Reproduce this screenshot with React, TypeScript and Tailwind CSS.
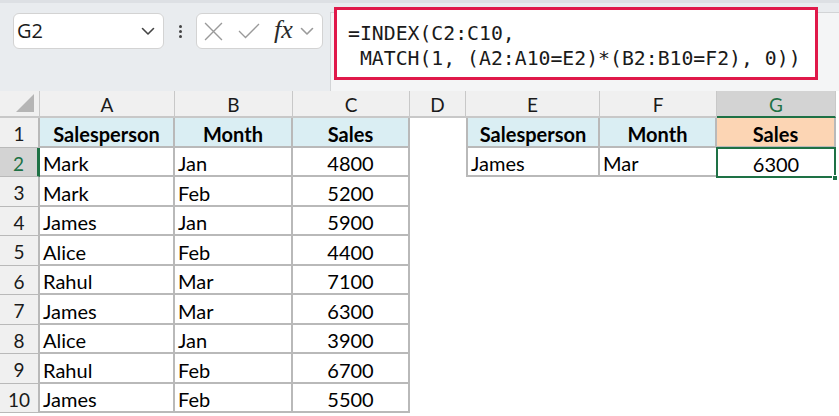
import React from "react";

const cols = [
  { key: "A", w: 135 },
  { key: "B", w: 118 },
  { key: "C", w: 117 },
  { key: "D", w: 56 },
  { key: "E", w: 134 },
  { key: "F", w: 117 },
  { key: "G", w: 119 },
];

const data = [
  ["Mark", "Jan", "4800"],
  ["Mark", "Feb", "5200"],
  ["James", "Jan", "5900"],
  ["Alice", "Feb", "4400"],
  ["Rahul", "Mar", "7100"],
  ["James", "Mar", "6300"],
  ["Alice", "Jan", "3900"],
  ["Rahul", "Feb", "6700"],
  ["James", "Feb", "5500"],
];

function Chevron({ className }: { className?: string }) {
  return (
    <svg className={className} width="14" height="9" viewBox="0 0 14 9" fill="none">
      <path d="M1.5 1.5 L7 7 L12.5 1.5" stroke="currentColor" strokeWidth="1.6" strokeLinecap="round" strokeLinejoin="round" />
    </svg>
  );
}

function Cell({
  text = "",
  w,
  align = "left",
  bold = false,
  bg = "bg-white",
  border = "",
}: {
  text?: string;
  w: number;
  align?: "left" | "center";
  bold?: boolean;
  bg?: string;
  border?: string;
}) {
  return (
    <div
      className={`h-full flex items-center pt-[4px] text-[20px] text-black ${bg} ${border} ${
        align === "center" ? "justify-center" : "justify-start pl-[3px]"
      } ${bold ? "font-bold" : ""}`}
      style={{ width: w }}
    >
      {text}
    </div>
  );
}

export default function App() {
  return (
    <div className="w-[839px] h-[416px] overflow-hidden bg-white font-['Lato',sans-serif]">
      {/* Toolbar / formula bar */}
      <div className="h-[91px] bg-[#e9ecef] flex flex-col">
        <div className="h-[3px] bg-[#dde0e4]" />
        <div className="flex items-start flex-1">
          {/* Name box */}
          <div className="ml-[13px] mt-[10px] w-[151px] h-[36px] rounded-[6px] border border-[#d3d3d3] bg-white flex items-center justify-between pl-[3px] pr-[8px]">
            <span className="text-[20px] text-[#1a1a1a] font-['Open_Sans',sans-serif]">G2</span>
            <Chevron className="text-[#444]" />
          </div>
          {/* Vertical dots */}
          <div className="w-[32px] h-[36px] mt-[10px] flex flex-col items-center justify-center gap-[2px]">
            <div className="w-[3px] h-[3px] rounded-full bg-[#444]" />
            <div className="w-[3px] h-[3px] rounded-full bg-[#444]" />
            <div className="w-[3px] h-[3px] rounded-full bg-[#444]" />
          </div>
          {/* Formula buttons */}
          <div className="mt-[10px] w-[127px] h-[36px] rounded-[6px] border border-[#d3d3d3] bg-white flex items-center pl-[7px]">
            <svg width="19" height="19" viewBox="0 0 18 18" className="text-[#9a9a9a]">
              <path d="M1 1 L17 17 M17 1 L1 17" stroke="currentColor" strokeWidth="1.3" />
            </svg>
            <svg width="22" height="16" viewBox="0 0 22 16" className="ml-[15px] text-[#9a9a9a]">
              <path d="M1 8 L7.5 14.5 L21 1" stroke="currentColor" strokeWidth="1.3" fill="none" />
            </svg>
            <span className="ml-[14px] text-[26px] leading-none italic text-[#2a2a2a] font-['Liberation_Serif',serif] -mt-[3px]">
              fx
            </span>
            <Chevron className="ml-[7px] text-[#9a9a9a]" />
          </div>
          {/* Formula bar */}
          <div className="ml-[7px] mt-[9px] flex-1 h-[79px] border-l border-t border-[#d2d4d6] bg-[#f4f5f6] relative">
            <div className="absolute left-[3px] -top-[6px] w-[484px] h-[73px] border-[3px] border-[#e0194a] bg-white pl-[11px] pt-[11px] font-['DejaVu_Sans_Mono',monospace] text-[19.8px] leading-[25px] text-[#1a1a1a] whitespace-pre">
              <div>=INDEX(C2:C10,</div>
              <div> MATCH(1, (A2:A10=E2)*(B2:B10=F2), 0))</div>
            </div>
          </div>
        </div>
      </div>

      {/* Column headers */}
      <div className="flex h-[27px]">
        <div className="w-[40px] h-full bg-[#f0f0f0] border-r border-b-2 border-[#c8c8c8] relative flex items-end justify-end pr-[5px] pb-[4px]">
          <svg width="18" height="18" viewBox="0 0 18 18">
            <path d="M18 0 L18 18 L0 18 Z" fill="#b5b5b5" />
          </svg>
        </div>
        {cols.map((c) => {
          const sel = c.key === "G";
          return (
            <div
              key={c.key}
              className={`h-full flex items-center justify-center pt-[3px] text-[19px] border-r ${
                sel
                  ? "bg-[#d3d3d3] text-[#1e7145] border-b-2 border-b-[#1e7145] border-r-[#c8c8c8]"
                  : "bg-[#f0f0f0] text-[#1a1a1a] border-b-2 border-[#c8c8c8]"
              }`}
              style={{ width: c.w }}
            >
              {c.key}
            </div>
          );
        })}
      </div>

      {/* Row 1 */}
      <div className="flex h-[29.5px]">
        <div className="w-[40px] h-full bg-[#f0f0f0] border-r-2 border-b border-[#b9b9b9] flex items-center justify-center pt-[4px] text-[19px] text-[#1a1a1a]">
          1
        </div>
        <Cell w={135} text="Salesperson" align="center" bold bg="bg-[#daeef3]" border="border-r-2 border-b-2 border-[#b9b9b9]" />
        <Cell w={118} text="Month" align="center" bold bg="bg-[#daeef3]" border="border-r-2 border-b-2 border-[#b9b9b9]" />
        <Cell w={117} text="Sales" align="center" bold bg="bg-[#daeef3]" border="border-r-2 border-b-2 border-[#b9b9b9]" />
        <Cell w={56} />
        <Cell w={134} text="Salesperson" align="center" bold bg="bg-[#daeef3]" border="border-l-2 border-r-2 border-b-2 border-[#b9b9b9]" />
        <Cell w={117} text="Month" align="center" bold bg="bg-[#daeef3]" border="border-r-2 border-b-2 border-[#b9b9b9]" />
        <Cell w={119} text="Sales" align="center" bold bg="bg-[#fcd5b4]" border="border-r-2 border-b-2 border-[#b9b9b9]" />
      </div>

      {/* Data rows */}
      {data.map((r, i) => {
        const n = i + 2;
        const sel = n === 2;
        return (
          <div key={n} className="flex h-[29.5px]">
            <div
              className={`w-[40px] h-full border-b border-[#b9b9b9] flex items-center justify-center pt-[4px] text-[19px] ${
                sel
                  ? "bg-[#d3d3d3] text-[#1e7145] border-r-[3px] border-r-[#1e7145]"
                  : "bg-[#f0f0f0] text-[#1a1a1a] border-r-2"
              }`}
            >
              {n}
            </div>
            <Cell w={135} text={r[0]} border="border-r-2 border-b-2 border-[#b9b9b9]" />
            <Cell w={118} text={r[1]} border="border-r-2 border-b-2 border-[#b9b9b9]" />
            <Cell w={117} text={r[2]} align="center" border="border-r-2 border-b-2 border-[#b9b9b9]" />
            <Cell w={56} />
            {sel ? (
              <>
                <Cell w={134} text="James" border="border-l-2 border-r-2 border-b-2 border-[#b9b9b9]" />
                <Cell w={117} text="Mar" border="border-b-2 border-[#b9b9b9]" />
                <div className="relative h-full" style={{ width: 119 }}>
                  <div className="absolute -left-[1px] -top-[1px] right-0 -bottom-[1px] border-2 border-[#1e7145] flex items-center justify-center pt-[4px] text-[20px] text-black">
                    6300
                  </div>
                  <div className="absolute -right-[2px] -bottom-[4px] w-[6px] h-[6px] bg-[#1e7145] border border-white" />
                </div>
              </>
            ) : null}
          </div>
        );
      })}
    </div>
  );
}
